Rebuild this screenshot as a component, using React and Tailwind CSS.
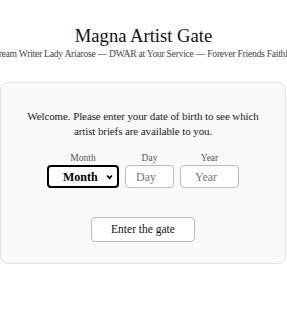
export default function App() {
  return (
    <div className="min-h-[323px] bg-white text-[#222] overflow-hidden" style={{ fontFamily: '"Liberation Serif", Georgia, serif' }}>
      <header className="pt-[25px] text-center">
        <h1 className="text-[18.6px] leading-[22px] text-[#111]">Magna Artist Gate</h1>
        <p className="text-[9.6px] tracking-[-0.25px] leading-[13px] text-[#444] whitespace-nowrap flex justify-center">
          Dream Writer Lady Ariarose — DWAR at Your Service — Forever Friends Faithful
        </p>
      </header>

      <main className="mt-[22px] border border-[#e2e2e2] rounded-[8px] bg-[#f9f9f9] w-[286px] h-[182px] pt-[26px] text-center">
        <p className="text-[11px] tracking-[-0.1px] leading-[15px] text-[#222] px-[20px]">
          Welcome. Please enter your date of birth to see which
          <br />
          artist briefs are available to you.
        </p>

        <div className="mt-[13px] flex justify-center gap-[6px]">
          <label className="flex flex-col items-center">
            <span className="text-[9.5px] leading-[12px] text-[#555] mb-[1px]">Month</span>
            <div className="relative w-[72px] h-[23px] border-2 border-black rounded-[4px] bg-white flex items-center">
              <span className="pl-[14px] text-[12px] font-bold text-black">Month</span>
              <svg className="absolute right-[4px] top-[7px]" width="7" height="6" viewBox="0 0 7 6">
                <path d="M1 1.5 L3.5 4.2 L6 1.5" fill="none" stroke="#000" strokeWidth="1.7" />
              </svg>
            </div>
          </label>
          <label className="flex flex-col items-center">
            <span className="text-[9.5px] leading-[12px] text-[#555] mb-[1px]">Day</span>
            <div className="w-[49px] h-[23px] border border-[#bbb] rounded-[4px] bg-white flex items-center pl-[10px] text-[12px] text-[#777]">
              Day
            </div>
          </label>
          <label className="flex flex-col items-center">
            <span className="text-[9.5px] leading-[12px] text-[#555] mb-[1px]">Year</span>
            <div className="w-[59px] h-[23px] border border-[#bbb] rounded-[4px] bg-white flex items-center pl-[14px] text-[12px] text-[#777]">
              Year
            </div>
          </label>
        </div>

        <div className="mt-[29px] flex justify-center">
          <button className="w-[104px] h-[25px] border border-[#bbb] rounded-[4px] bg-white text-[11.5px] font-medium text-[#111]">
            Enter the gate
          </button>
        </div>
      </main>
    </div>
  );
}
